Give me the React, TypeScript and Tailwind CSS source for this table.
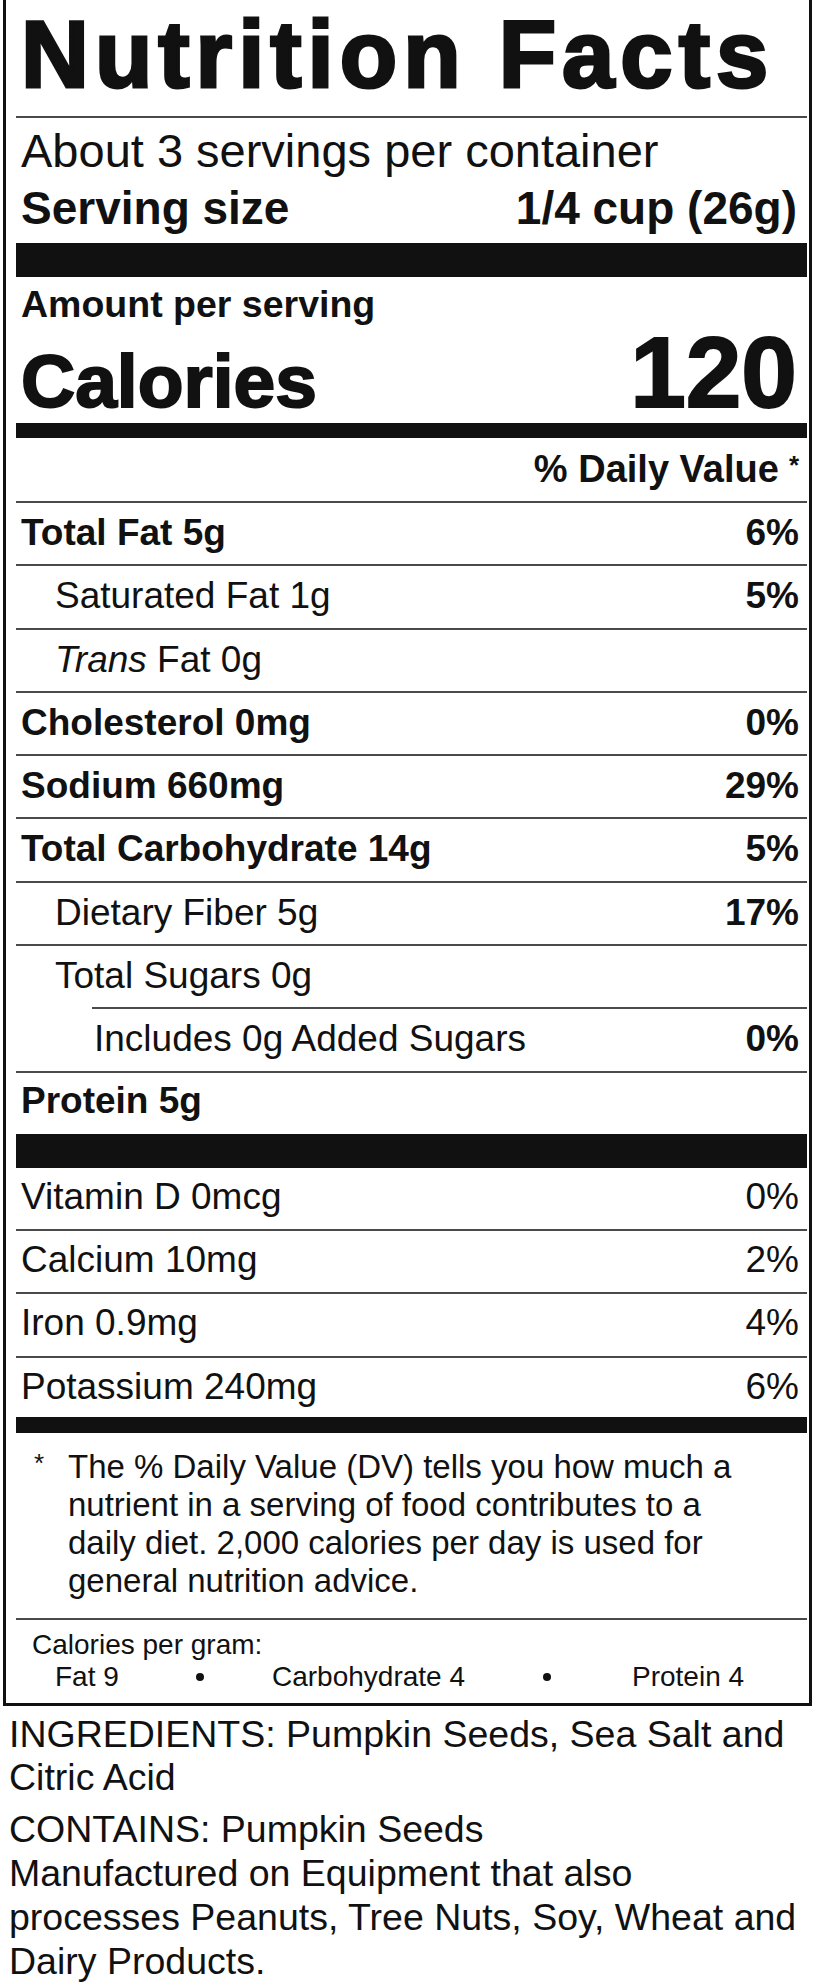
const nutrients = [
  { name: "Total Fat", amount: "5g", dv: "6%", bold: true, level: 0 },
  { name: "Saturated Fat", amount: "1g", dv: "5%", level: 1 },
  { name: "Trans", amount: "Fat 0g", dv: "", level: 1, italic: true },
  { name: "Cholesterol", amount: "0mg", dv: "0%", bold: true, level: 0 },
  { name: "Sodium", amount: "660mg", dv: "29%", bold: true, level: 0 },
  { name: "Total Carbohydrate", amount: "14g", dv: "5%", bold: true, level: 0 },
  { name: "Dietary Fiber", amount: "5g", dv: "17%", level: 1 },
  { name: "Total Sugars", amount: "0g", dv: "", level: 1, shortLine: true },
  { name: "Includes 0g Added Sugars", amount: "", dv: "0%", level: 2 },
];

const vitamins = [
  { name: "Vitamin D", amount: "0mcg", dv: "0%" },
  { name: "Calcium", amount: "10mg", dv: "2%" },
  { name: "Iron", amount: "0.9mg", dv: "4%" },
  { name: "Potassium", amount: "240mg", dv: "6%" },
];

const indent = ["pl-[5px]", "pl-[39px]", "pl-[78px]"];

function Rule({ short }: { short?: boolean }) {
  return <div className={short ? "ml-[76px] h-[2px] bg-[#4a4a4a]" : "h-[2px] bg-[#4a4a4a]"} />;
}

export default function App() {
  return (
    <div className="w-[818px] bg-white pb-[10px] font-['Liberation_Sans',Arial,sans-serif] text-[#111]">
      <div className="ml-[3px] w-[809px] border-x-[3px] border-b-[3px] border-[#111] pl-[10px] pr-[2px]">
        <h1 className="whitespace-nowrap pl-[5px] pt-[8px] text-[94px] font-bold leading-[94px] tracking-[6px] [-webkit-text-stroke:3px_#111]">
          Nutrition Facts
        </h1>
        <div className="mt-[14px]">
          <Rule />
        </div>
        <p className="mt-[8px] whitespace-nowrap px-[5px] text-[47px] leading-[50px]">About 3 servings per container</p>
        <div className="mt-[7px] flex justify-between pl-[5px] pr-[10px] text-[46px] font-bold leading-[50px]">
          <span>Serving size</span>
          <span>1/4 cup (26g)</span>
        </div>
        <div className="mt-[10px] h-[34px] bg-[#111]" />

        <p className="mt-[10px] px-[5px] text-[37.5px] font-bold leading-[35px]">Amount per serving</p>
        <div className="flex items-baseline justify-between pl-[5px] pr-[10px] font-bold">
          <span className="text-[75px] leading-[73px] [-webkit-text-stroke:2px_#111]">Calories</span>
          <span className="text-[100px] leading-[100px] [-webkit-text-stroke:2px_#111]">120</span>
        </div>
        <div className="mt-[1px] h-[15px] bg-[#111]" />

        <div className="h-[63px] pt-[13px] pr-[8px] text-right text-[38px] font-bold leading-[36px]">
          % Daily Value<span className="relative top-[-8px] ml-[10px] text-[26px]">*</span>
        </div>
        <Rule />

        {nutrients.map((n, i) => (
          <div key={i}>
            <div className={`flex h-[61.3px] justify-between pt-[11px] pr-[8px] text-[37px] leading-[37px] ${indent[n.level]}`}>
              <span className={n.bold ? "font-bold" : ""}>
                {n.italic ? <i>{n.name}</i> : n.name}
                {n.amount ? ` ${n.amount}` : ""}
              </span>
              <span className="font-bold">{n.dv}</span>
            </div>
            <Rule short={n.shortLine} />
          </div>
        ))}
        <div className="h-[61px] pl-[5px] pt-[9px] text-[37px] font-bold leading-[37px]">Protein 5g</div>
        <div className="h-[34px] bg-[#111]" />

        {vitamins.map((v, i) => (
          <div key={i}>
            <div className={`flex justify-between pl-[5px] pr-[8px] pt-[10px] text-[37px] leading-[37px] ${i === 3 ? "h-[59px]" : "h-[61.3px]"}`}>
              <span>
                {v.name} {v.amount}
              </span>
              <span>{v.dv}</span>
            </div>
            {i < 3 && <Rule />}
          </div>
        ))}
        <div className="h-[16px] bg-[#111]" />

        <div className="mt-[15px] flex">
          <span className="w-[52px] pl-[18px] text-[26px] leading-[30px]">*</span>
          <p className="whitespace-nowrap text-[33px] leading-[38px]">
            The % Daily Value (DV) tells you how much a
            <br />
            nutrient in a serving of food contributes to a
            <br />
            daily diet. 2,000 calories per day is used for
            <br />
            general nutrition advice.
          </p>
        </div>
        <div className="mt-[18px]">
          <Rule />
        </div>

        <div className="mt-[9px] pb-[10px] text-[28px] leading-[32px]">
          <p className="pl-[16px]">Calories per gram:</p>
          <div className="flex items-center">
            <span className="ml-[39px] w-[141px]">Fat 9</span>
            <span className="h-[8px] w-[8px] rounded-full bg-[#111]" />
            <span className="ml-[68px] w-[271px]">Carbohydrate 4</span>
            <span className="h-[8px] w-[8px] rounded-full bg-[#111]" />
            <span className="ml-[81px]">Protein 4</span>
          </div>
        </div>
      </div>

      <div className="mt-[7px] whitespace-nowrap pl-[9px] text-[37.5px]">
        <p className="leading-[43px]">
          INGREDIENTS: Pumpkin Seeds, Sea Salt and
          <br />
          Citric Acid
        </p>
        <p className="mt-[8px] leading-[44px]">
          CONTAINS: Pumpkin Seeds
          <br />
          Manufactured on Equipment that also
          <br />
          processes Peanuts, Tree Nuts, Soy, Wheat and
          <br />
          Dairy Products.
        </p>
      </div>
    </div>
  );
}
